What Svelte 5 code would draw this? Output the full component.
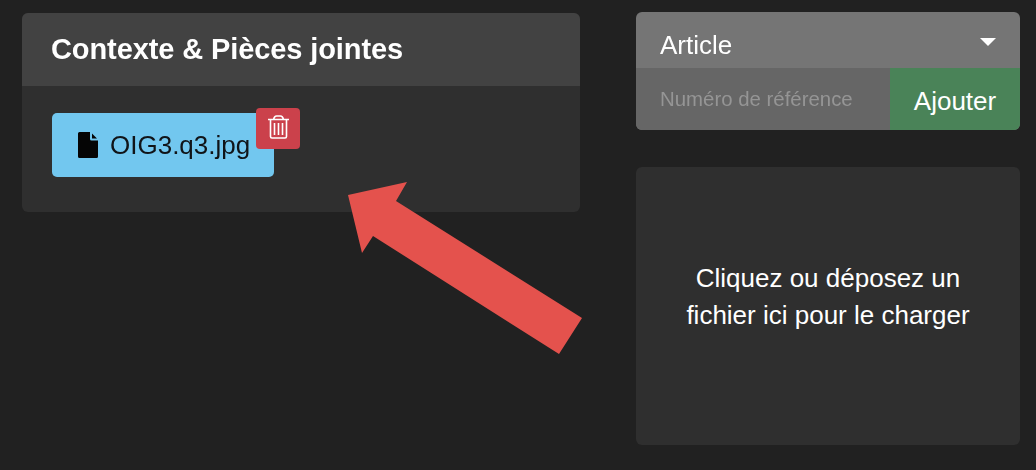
<script>
  let reference = "";
  const fileName = "OIG3.q3.jpg";
</script>

<div class="page">
  <section class="card attachments">
    <h2 class="card-header">Contexte &amp; Pièces jointes</h2>
    <div class="card-body">
      <div class="chip">
        <svg class="file-icon" viewBox="0 0 20 26" aria-hidden="true">
          <path d="M0 1.500A1.500 1.500 0 0 1 1.500 0H12v7a1.500 1.500 0 0 0 1.500 1.500H20v16a1.500 1.500 0 0 1-1.500 1.500H1.500A1.500 1.500 0 0 1 0 24.500zM14 1.500l5 5h-5z" />
        </svg>
        <span>{fileName}</span>
        <button class="delete" aria-label="Supprimer">
          <svg viewBox="0 0 21 24" aria-hidden="true">
            <path d="M0 4.500h21M5.500 4.500C6 2.500 7 1 8.500 1h4c1.500 0 2.500 1.500 3 3.500M2.500 4.500V21.500A1.500 1.500 0 0 0 4 23h13a1.500 1.500 0 0 0 1.500-1.500V4.500M6.500 8v12M10.500 8v12M14.500 8v12" />
          </svg>
        </button>
      </div>
    </div>
  </section>

  <aside class="side">
    <div class="ref-box">
      <div class="select">
        <span class="select-label">Article</span>
        <span class="caret"></span>
      </div>
      <div class="ref-row">
        <input type="text" placeholder="Numéro de référence" bind:value={reference} />
        <button class="add">Ajouter</button>
      </div>
    </div>
    <div class="dropzone">Cliquez ou déposez un<br />fichier ici pour le charger</div>
  </aside>

  <svg class="arrow" viewBox="0 0 1036 470" aria-hidden="true">
    <polygon points="348,195 407,182 396,201 582,318 559,354 373,236 362,253" />
  </svg>
</div>

<style>
  :global(body) {
    margin: 0;
    background: #212121;
  }

  .page {
    position: relative;
    display: flex;
    justify-content: space-between;
    align-items: flex-start;
    width: 1036px;
    height: 470px;
    box-sizing: border-box;
    padding: 12px 16px 0 22px;
    overflow: hidden;
    font-family: "Liberation Sans", Arial, sans-serif;
    color: #fff;
  }

  /* the source capture is soft, so everything under the arrow gets a slight blur */
  .card,
  .side {
    filter: blur(0.4px);
  }

  .card {
    background: #2f2f2f;
    border-radius: 6px;
  }

  .attachments {
    width: 558px;
    margin-top: 1px;
  }

  .card-header {
    margin: 0;
    height: 73px;
    padding: 0 29px;
    display: flex;
    align-items: center;
    background: #424242;
    border-radius: 6px 6px 0 0;
    font-size: 29px;
    font-weight: 700;
    letter-spacing: -0.1px;
  }

  .card-body {
    padding: 27px 30px 35px;
  }

  .chip {
    position: relative;
    display: flex;
    align-items: center;
    gap: 12px;
    width: 222px;
    height: 64px;
    box-sizing: border-box;
    padding-left: 26px;
    background: #72c7ef;
    border-radius: 5px;
    color: #101418;
    font-size: 26px;
  }

  .file-icon {
    width: 20px;
    height: 26px;
    fill: #050505;
    flex: none;
  }

  .delete {
    position: absolute;
    top: -5px;
    left: 204px;
    width: 44px;
    height: 41px;
    padding: 0 0 3px;
    display: flex;
    align-items: center;
    justify-content: center;
    background: #cb414b;
    border: none;
    border-radius: 4px;
  }

  .delete svg {
    width: 21px;
    height: 24px;
    fill: none;
    stroke: #fff;
    stroke-width: 1.600;
  }

  .side {
    display: flex;
    flex-direction: column;
    gap: 37px;
    width: 384px;
  }

  .ref-box {
    height: 118px;
    border-radius: 6px;
    overflow: hidden;
    background: #757575;
  }

  .select {
    height: 56px;
    display: flex;
    align-items: center;
    justify-content: space-between;
    padding: 0 24px;
    font-size: 26px;
  }

  .select-label {
    padding-top: 10px;
  }

  .caret {
    width: 0;
    height: 0;
    margin-top: 4px;
    border-left: 8px solid transparent;
    border-right: 8px solid transparent;
    border-top: 8px solid #fff;
  }

  .ref-row {
    display: flex;
    height: 62px;
  }

  .ref-row input {
    flex: 1;
    min-width: 0;
    border: none;
    outline: none;
    padding: 0 0 0 24px;
    background: #666;
    color: #fff;
    font: 20.400px "Liberation Sans", Arial, sans-serif;
  }

  .ref-row input::placeholder {
    color: #959595;
    opacity: 1;
  }

  .add {
    width: 130px;
    border: none;
    background: #4a8358;
    color: #fff;
    font: 26px "Liberation Sans", Arial, sans-serif;
    padding: 4px 0 0;
  }

  .dropzone {
    height: 278px;
    box-sizing: border-box;
    padding-bottom: 18px;
    display: flex;
    align-items: center;
    justify-content: center;
    text-align: center;
    background: #2f2f2f;
    border-radius: 6px;
    font-size: 26px;
    line-height: 37px;
  }

  .arrow {
    position: absolute;
    inset: 0;
    width: 1036px;
    height: 470px;
    fill: #e4524d;
    pointer-events: none;
  }
</style>
